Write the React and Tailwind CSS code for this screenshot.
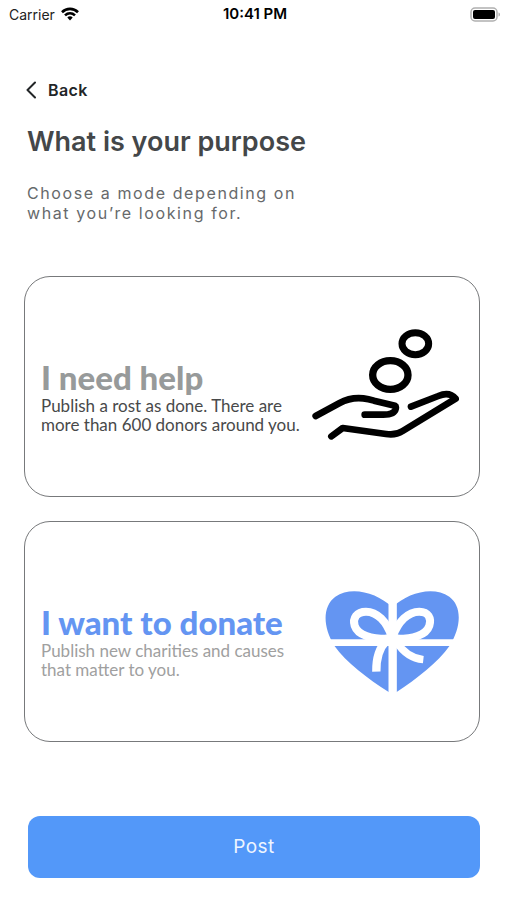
function WifiIcon() {
  return (
    <svg viewBox="0 0 18 14" className="h-[14px] w-[18px]" fill="none" stroke="#000" strokeWidth="2.6" aria-hidden="true">
      <path d="M1 5.2C5.5.8 12.500.8 17 5.200" />
      <path d="M4 8.400c2.900-2.700 7.100-2.700 10 0" />
      <path d="M6.300 10.400c1.500-1.400 3.900-1.400 5.400 0L9 13.400z" fill="#000" stroke="none" />
    </svg>
  );
}

function BatteryIcon() {
  return (
    <svg viewBox="0 0 31 15" className="h-[15px] w-[31px]" aria-hidden="true">
      <rect x="1" y="1" width="26" height="13" rx="4" fill="#fff" stroke="#b0b0b0" strokeWidth="1.500" />
      <rect x="3" y="3" width="22" height="9" rx="2" fill="#000" />
      <path d="M28.500 5.500c2 .6 2 3.400 0 4z" fill="#b0b0b0" />
    </svg>
  );
}

function HandIcon() {
  return (
    <svg viewBox="36 57 441 333" className="h-[111px] w-[147px] shrink-0" fill="none" stroke="#000" strokeWidth="20" strokeLinecap="round" strokeLinejoin="round" aria-hidden="true">
      <ellipse cx="346" cy="101" rx="40" ry="33" strokeWidth="21" />
      <ellipse cx="271" cy="195" rx="53" ry="43" strokeWidth="22" />
      <path d="M47 318L119 279Q151 261 190 265Q205 267 222 272L285 287Q289 289 287 297C284 310 273 314 250 314H194" />
      <path d="M94 379L128 354L258 372Q286 377 308 363L467 266Q448 244 415 258L333 290" />
    </svg>
  );
}

function GiftHeartIcon() {
  return (
    <svg viewBox="44 47 405 306" className="h-[102px] w-[135px] shrink-0" aria-hidden="true">
      <path d="M249 357L238 350C177 311 110 261 75 211C39 153 40 92 78 64C126 31 202 51 249 96C296 51 372 31 420 64C458 92 457 153 421 211C386 261 321 311 262 350Z" fill="#6495f2" />
      <g fill="none" stroke="#fff">
        <path d="M250 40V360" strokeWidth="25" />
        <path d="M40 202H455" strokeWidth="20" />
        <path d="M247 184C232 138 203 109 170 109C142 109 129 129 136 151C145 178 184 193 247 190" strokeWidth="24" />
        <path d="M250 184C267 138 296 109 330 109C357 109 367 129 360 151C351 178 312 193 250 190" strokeWidth="24" />
        <path d="M232 195C210 217 200 245 201 289" strokeWidth="25" />
        <path d="M262 200C282 232 305 249 342 253" strokeWidth="22" />
      </g>
      <path d="M228 178H270L277 209H218Z" fill="#fff" />
    </svg>
  );
}

function ModeCard({ title, titleClass, lines, textClass, icon }) {
  return (
    <button type="button" className="flex h-[221px] w-full items-center justify-between rounded-[26px] border border-[#77797b] bg-white pr-5 pl-4 text-left font-[Lato,sans-serif]">
      <span className="flex flex-col pt-[18px]">
        <span className={`text-[33px] leading-[38px] font-black whitespace-nowrap ${titleClass}`}>{title}</span>
        {lines.map((line) => (
          <span key={line} className={`text-[17px] leading-[19px] whitespace-nowrap ${textClass}`}>
            {line}
          </span>
        ))}
      </span>
      {icon}
    </button>
  );
}

export default function App() {
  return (
    <div className="min-h-screen bg-white font-[Inter,sans-serif]">
      <header className="grid h-7 grid-cols-3 items-center pr-[6px] pl-[9px] text-[14px] text-[#222]">
        <span className="flex items-center gap-[6px]">
          Carrier
          <WifiIcon />
        </span>
        <time className="text-center text-[15px] leading-5 font-semibold text-black">10:41 PM</time>
        <span className="flex justify-end">
          <BatteryIcon />
        </span>
      </header>
      <main className="flex flex-col pt-[50px] pr-[27px] pl-6">
        <button type="button" className="flex h-6 items-center gap-3 self-start text-[16px] font-semibold tracking-wide text-[#222527]">
          <svg viewBox="0 0 12 18" className="h-[18px] w-3" fill="none" stroke="#222527" strokeWidth="2" strokeLinecap="round" strokeLinejoin="round" aria-hidden="true">
            <path d="M11 1.500L3.500 9l7.500 7.500" />
          </svg>
          Back
        </button>
        <h1 className="mt-[22px] pl-[3px] text-[27px] leading-9 font-semibold text-[#444749]">What is your purpose</h1>
        <p className="mt-[23px] pl-[3px] text-[16px] leading-5 tracking-widest text-[#66696b]">
          Choose a mode depending on
          <br />
          what you’re looking for.
        </p>
        <div className="mt-[53px] flex flex-col gap-6">
          <ModeCard
            title="I need help"
            titleClass="text-[#979a9a]"
            lines={["Publish a rost as done. There are", "more than 600 donors around you."]}
            textClass="text-[#48494a]"
            icon={
              <span className="pb-1">
                <HandIcon />
              </span>
            }
          />
          <ModeCard
            title="I want to donate"
            titleClass="text-[#6495f2]"
            lines={["Publish new charities and causes", "that matter to you."]}
            textClass="text-[#a0a0a0]"
            icon={
              <span className="pt-5">
                <GiftHeartIcon />
              </span>
            }
          />
        </div>
        <button type="button" className="mt-[74px] ml-1 h-[62px] rounded-xl bg-[#5398f9] text-[19px] tracking-wide text-[#eef5ff]">
          Post
        </button>
      </main>
    </div>
  );
}
